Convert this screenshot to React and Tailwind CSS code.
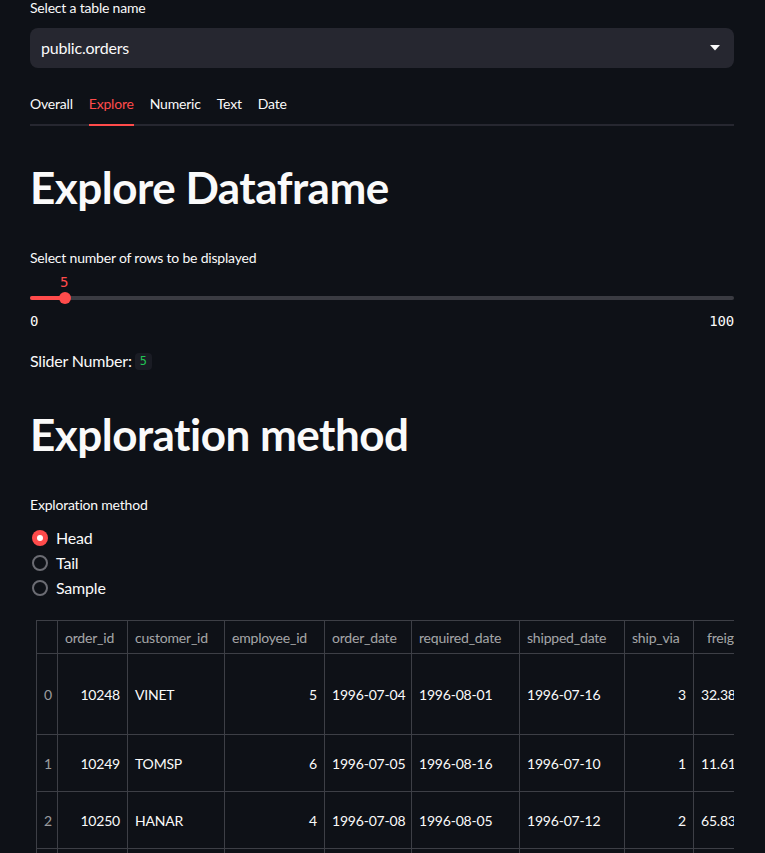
import { useState } from 'react';

const tabs = ['Overall', 'Explore', 'Numeric', 'Text', 'Date'];

const columns = [
  { key: 'idx', label: '', w: 'w-[21px]' },
  { key: 'order_id', label: 'order_id', w: 'w-[70px]', num: true },
  { key: 'customer_id', label: 'customer_id', w: 'w-[97px]' },
  { key: 'employee_id', label: 'employee_id', w: 'w-[100px]', num: true },
  { key: 'order_date', label: 'order_date', w: 'w-[87px]' },
  { key: 'required_date', label: 'required_date', w: 'w-[108px]' },
  { key: 'shipped_date', label: 'shipped_date', w: 'w-[105px]' },
  { key: 'ship_via', label: 'ship_via', w: 'w-[69px]', num: true },
  { key: 'freight', label: 'freight', w: 'w-[80px]' },
];

const rows = [
  { h: 'h-[81px]', idx: 0, order_id: 10248, customer_id: 'VINET', employee_id: 5, order_date: '1996-07-04', required_date: '1996-08-01', shipped_date: '1996-07-16', ship_via: 3, freight: '32.38' },
  { h: 'h-[57px]', idx: 1, order_id: 10249, customer_id: 'TOMSP', employee_id: 6, order_date: '1996-07-05', required_date: '1996-08-16', shipped_date: '1996-07-10', ship_via: 1, freight: '11.61' },
  { h: 'h-[57px]', idx: 2, order_id: 10250, customer_id: 'HANAR', employee_id: 4, order_date: '1996-07-08', required_date: '1996-08-05', shipped_date: '1996-07-12', ship_via: 2, freight: '65.83' },
  { h: 'h-[57px]', idx: 3, order_id: 10251, customer_id: 'VICTE', employee_id: 3, order_date: '1996-07-08', required_date: '1996-08-05', shipped_date: '1996-07-15', ship_via: 1, freight: '41.34' },
];

const Radio = ({ label, checked, onClick }) => (
  <button onClick={onClick} className="flex items-center gap-[8px] h-[25px] pl-[2px] text-[16px] text-[#fafafa]">
    {checked ? (
      <span className="w-[16px] h-[16px] rounded-full bg-[#ff4b4b] flex items-center justify-center">
        <span className="w-[6px] h-[6px] rounded-full bg-white" />
      </span>
    ) : (
      <span className="w-[16px] h-[16px] rounded-full border-2 border-[#6b6c73]" />
    )}
    <span>{label}</span>
  </button>
);

const App = () => {
  const [tab, setTab] = useState('Explore');
  const [method, setMethod] = useState('Head');

  return (
    <div className="min-h-screen bg-[#0e1117] text-[#fafafa] tracking-[-0.2px] font-['Lato','Liberation_Sans',sans-serif]">
      <div className="w-[704px] ml-[30px] pb-10">
        {/* Table select */}
        <div className="text-[14px] leading-[16px]">Select a table name</div>
        <div className="mt-[12px] h-[40px] rounded-[8px] bg-[#262730] flex items-center justify-between pl-[11px] pr-[14px]">
          <span className="text-[16px]">public.orders</span>
          <svg width="10" height="6" viewBox="0 0 10 6">
            <path d="M0 0 L10 0 L5 5.5 Z" fill="#fafafa" />
          </svg>
        </div>

        {/* Tabs */}
        <div className="mt-[26px] flex gap-[16px] border-b-2 border-[#262730]">
          {tabs.map((t) => (
            <button
              key={t}
              onClick={() => setTab(t)}
              className={`relative text-[14px] leading-[20px] pb-[10px] ${t === tab ? 'text-[#ff4b4b]' : 'text-[#fafafa]'}`}
            >
              {t}
              {t === tab && <span className="absolute left-0 right-0 -bottom-[2px] h-[2px] bg-[#ff4b4b]" />}
            </button>
          ))}
        </div>

        <h1 className="mt-[35px] text-[44px] leading-[53px] font-bold tracking-[-0.5px]">Explore Dataframe</h1>

        {/* Slider */}
        <div className="mt-[34px] text-[14px] leading-[20px]">Select number of rows to be displayed</div>
        <div className="relative h-[43px]">
          <div className="absolute top-[4px] left-[30px] text-[14px] leading-[20px] text-[#ff4b4b] font-['DejaVu_Sans_Mono',monospace]">5</div>
          <div className="absolute top-[28px] left-0 right-0 h-[4px] rounded-full bg-[#3a3b42]" />
          <div className="absolute top-[28px] left-0 w-[35px] h-[4px] rounded-l-full bg-[#ff4b4b]" />
          <div className="absolute top-[24px] left-[29px] w-[12px] h-[12px] rounded-full bg-[#ff4b4b]" />
        </div>
        <div className="flex justify-between text-[14px] leading-[20px] font-['DejaVu_Sans_Mono',monospace]">
          <span>0</span>
          <span>100</span>
        </div>

        <div className="mt-[20px] flex items-center gap-[3px] text-[16px] leading-[20px]">
          <span>Slider Number:</span>
          <code className="px-[5px] rounded-[4px] bg-[#1a1c24] text-[#21c354] text-[12px] leading-[17px] font-['DejaVu_Sans_Mono',monospace]">5</code>
        </div>

        <h1 className="mt-[37px] text-[44px] leading-[53px] font-bold tracking-[-0.5px]">Exploration method</h1>

        {/* Radios */}
        <div className="mt-[34px] text-[14px] leading-[20px]">Exploration method</div>
        <div className="mt-[10px] flex flex-col">
          {['Head', 'Tail', 'Sample'].map((m) => (
            <Radio key={m} label={m} checked={method === m} onClick={() => setMethod(m)} />
          ))}
        </div>

        {/* Dataframe */}
        <div className="mt-[20px] ml-[6px] w-[698px] overflow-hidden">
          <table className="table-fixed border-collapse text-[14px] w-[737px]">
            <colgroup>
              {columns.map((c) => (
                <col key={c.key} className={c.w} />
              ))}
            </colgroup>
            <thead>
              <tr className="h-[33px]">
                {columns.map((c) => (
                  <th
                    key={c.key}
                    className={`border border-[#3d3f46] font-normal text-left text-[#fafafa]/65 whitespace-nowrap overflow-hidden ${c.key === 'freight' ? 'pl-[13px]' : 'px-[7px]'}`}
                  >
                    {c.label}
                  </th>
                ))}
              </tr>
            </thead>
            <tbody>
              {rows.map((r) => (
                <tr key={r.idx} className={r.h}>
                  {columns.map((c) => (
                    <td
                      key={c.key}
                      className={`border border-[#3d3f46] px-[7px] whitespace-nowrap overflow-hidden ${
                        c.key === 'idx' ? 'text-[#fafafa]/60 text-center px-0' : c.num ? 'text-right' : 'text-left'
                      }`}
                    >
                      {r[c.key]}
                    </td>
                  ))}
                </tr>
              ))}
            </tbody>
          </table>
        </div>
      </div>
    </div>
  );
};

export default App;
